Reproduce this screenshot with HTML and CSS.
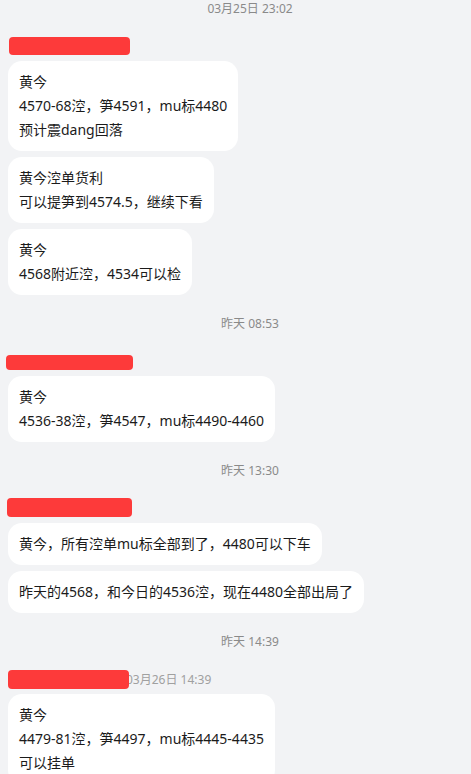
FILE: index.html
```html
<!DOCTYPE html>
<html lang="zh-CN">
<head>
    <meta charset="UTF-8">
    <meta name="viewport" content="width=device-width, initial-scale=1.0">
    <title>消息</title>
<link rel="stylesheet" href="styles.css">
</head>
<body>
    <div class="chat">
        <div class="time first">03月25日 23:02</div>
        <div class="group">
            <div class="head"><span class="mask m1"></span></div>
            <div class="bubble">黄今<br>4570-68涳，笋4591，mu标4480<br>预计震dang回落</div>
            <div class="bubble">黄今涳单货利<br>可以提笋到4574.5，继续下看</div>
            <div class="bubble">黄今<br>4568附近涳，4534可以检</div>
        </div>

        <div class="time">昨天 08:53</div>
        <div class="group">
            <div class="head"><span class="mask m2"></span></div>
            <div class="bubble">黄今<br>4536-38涳，笋4547，mu标4490-4460</div>
        </div>

        <div class="time">昨天 13:30</div>
        <div class="group">
            <div class="head"><span class="mask m3"></span></div>
            <div class="bubble">黄今，所有涳单mu标全部到了，4480可以下车</div>
            <div class="bubble">昨天的4568，和今日的4536涳，现在4480全部出局了</div>
        </div>

        <div class="time">昨天 14:39</div>
        <div class="group">
            <div class="head"><span class="mask m4"></span><span class="sent">03月26日 14:39</span></div>
            <div class="bubble">黄今<br>4479-81涳，笋4497，mu标4445-4435<br>可以挂单</div>
        </div>
    </div>
</body>
</html>
```
FILE: styles.css
```css
*{
    margin: 0px;
    box-sizing: border-box;
}
body{
    background: #f2f3f5;
    font-family: "Noto Sans", "Noto Sans CJK SC", sans-serif;
    overflow: hidden;
}
.chat{
    display: flex;
    flex-direction: column;
    padding: 0 8px;
}
.time{
    margin: 20px 0 18px 29px;
    line-height: 18px;
    font-size: 12px;
    color: #8a8a8a;
    text-align: center;
}
.time.first{
    margin-top: 0;
}
.group{
    display: flex;
    flex-direction: column;
    align-items: flex-start;
    gap: 6px;
}
.head{
    display: flex;
    align-items: flex-start;
    height: 20px;
    margin-bottom: -1px;
}
.mask{
    display: inline-block;
    width: 121px; height: 19px;
    background: #fd3a3a;
    border-radius: 4px;
    position: relative; z-index: 1;
}
.m1{ margin: 1px 0 0 1px; height: 18px; }
.m2{ margin: 4px 0 0 -2px; width: 127px; height: 15px; }
.m3{ margin: 0 0 0 -1px; width: 125px; }
.m4{ margin: 1px 0 0 0; }
.sent{
    margin-left: -3px;
    line-height: 22px;
    font-size: 12px;
    color: #a0a0a0;
}
.bubble{
    background: #fff;
    border-radius: 14px;
    padding: 9px 11px;
    font-size: 14px;
    line-height: 24px;
    color: #1b1b1b;
}
```
